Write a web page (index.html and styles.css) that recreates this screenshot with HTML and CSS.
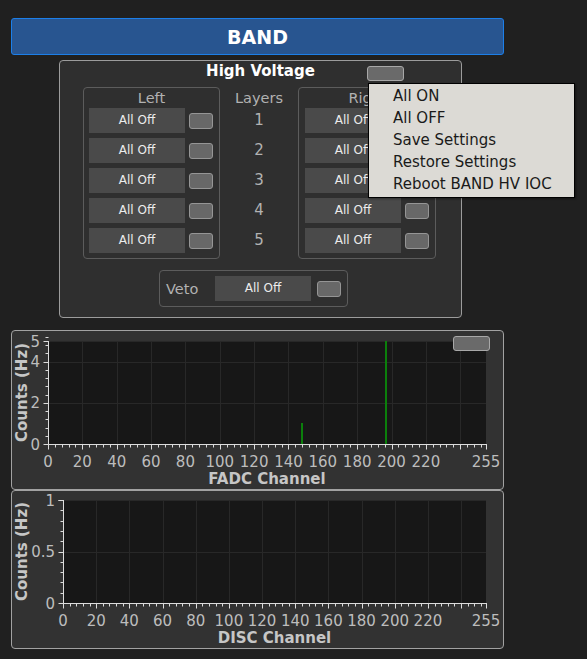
FILE: index.html
```html
<!DOCTYPE html>
<html>
<head>
<meta charset="utf-8">
<link rel="stylesheet" href="styles.css">
</head>
<body>
<div class="page">
  <div class="header">BAND</div>

  <section class="hv">
    <div class="hv-title-row">
      <span></span>
      <h2 class="hv-title">High Voltage</h2>
      <div class="hv-menu-cell"><div class="mini-btn"></div></div>
    </div>

    <div class="hv-groups">
      <div class="group group-left">
        <div class="group-label">Left</div>
        <div class="row"><div class="off-btn">All Off</div><div class="ind"></div></div>
        <div class="row"><div class="off-btn">All Off</div><div class="ind"></div></div>
        <div class="row"><div class="off-btn">All Off</div><div class="ind"></div></div>
        <div class="row"><div class="off-btn">All Off</div><div class="ind"></div></div>
        <div class="row"><div class="off-btn">All Off</div><div class="ind"></div></div>
      </div>
      <div class="layers">
        <div class="group-label">Layers</div>
        <div class="layer-num">1</div>
        <div class="layer-num">2</div>
        <div class="layer-num">3</div>
        <div class="layer-num">4</div>
        <div class="layer-num">5</div>
      </div>
      <div class="group group-right">
        <div class="group-label">Right</div>
        <div class="row"><div class="off-btn">All Off</div><div class="ind"></div></div>
        <div class="row"><div class="off-btn">All Off</div><div class="ind"></div></div>
        <div class="row"><div class="off-btn">All Off</div><div class="ind"></div></div>
        <div class="row"><div class="off-btn">All Off</div><div class="ind"></div></div>
        <div class="row"><div class="off-btn">All Off</div><div class="ind"></div></div>
      </div>
    </div>

    <div class="veto">
      <span class="veto-label">Veto</span>
      <div class="off-btn">All Off</div>
      <div class="ind"></div>
    </div>

    <ul class="menu">
      <li>All ON</li>
      <li>All OFF</li>
      <li>Save Settings</li>
      <li>Restore Settings</li>
      <li>Reboot BAND HV IOC</li>
    </ul>
  </section>

  <section class="chart chart-fadc">
    <svg id="fadc" xmlns="http://www.w3.org/2000/svg"></svg>
    <div class="mini-btn corner-btn"></div>
  </section>

  <section class="chart chart-disc">
    <svg id="disc" xmlns="http://www.w3.org/2000/svg"></svg>
  </section>
</div>
<script src="chart.js"></script>
</body>
</html>
```

FILE: styles.css
```css
html, body {
  margin: 0;
  padding: 0;
  background: #202020;
  font-family: "DejaVu Sans", "Noto Sans", sans-serif;
}

.page {
  padding: 18px 0 0 11px;
  width: 493px;
}

.header {
  box-sizing: border-box;
  width: 493px;
  height: 37px;
  background: #285590;
  border: 1px solid #1c7fe9;
  border-radius: 3px;
  color: #ffffff;
  font-weight: bold;
  font-size: 19px;
  display: flex;
  align-items: center;
  justify-content: center;
}

.hv {
  position: relative;
  box-sizing: border-box;
  margin: 5px 0 0 48px;
  width: 403px;
  height: 258px;
  background: #2f2f2f;
  border: 1px solid #9c9c9c;
  border-radius: 4px;
}

.hv-title-row {
  display: grid;
  grid-template-columns: 1fr auto 1fr;
  height: 20px;
}

.hv-title {
  margin: 0;
  font-size: 15px;
  font-weight: bold;
  color: #ffffff;
  line-height: 20px;
}

.hv-menu-cell {
  display: flex;
  align-items: flex-end;
}

.mini-btn {
  box-sizing: border-box;
  width: 37px;
  height: 15px;
  background: #6a6a6a;
  border: 1px solid #a8a8a8;
  border-radius: 3px;
}

.hv-menu-cell .mini-btn {
  margin-left: 52px;
}

.hv-groups {
  display: flex;
  margin: 6px 0 0 23px;
}

.group {
  box-sizing: border-box;
  width: 137px;
  height: 172px;
  border: 1px solid #5c5c5c;
  border-radius: 4px;
  padding: 0 0 0 5px;
  display: flex;
  flex-direction: column;
  gap: 5px;
}

.group-right {
  width: 138px;
  padding-left: 6px;
}

.group-label {
  height: 20px;
  line-height: 20px;
  margin-bottom: -5px;
  font-size: 14.5px;
  color: #b2b2b2;
  text-align: center;
}

.group .group-label {
  margin-left: -5px;
}

.row {
  display: flex;
  align-items: center;
  gap: 4px;
  height: 25px;
}

.off-btn {
  width: 96px;
  height: 25px;
  background: #4a4a4a;
  color: #ececec;
  font-size: 12px;
  line-height: 25px;
  text-align: center;
  flex: none;
}

.ind {
  box-sizing: border-box;
  width: 24px;
  height: 16px;
  background: #686868;
  border: 1px solid #959595;
  border-radius: 3px;
  flex: none;
}

.layers {
  width: 78px;
  padding-top: 1px;
  display: flex;
  flex-direction: column;
  gap: 5px;
}

.layer-num {
  height: 25px;
  line-height: 25px;
  text-align: center;
  font-size: 15px;
  color: #b2b2b2;
}

.veto {
  box-sizing: border-box;
  margin: 11px 0 0 99px;
  width: 189px;
  height: 37px;
  border: 1px solid #5c5c5c;
  border-radius: 4px;
  padding: 0 5px 0 6px;
  display: flex;
  align-items: center;
}

.veto-label {
  font-size: 14.5px;
  color: #b2b2b2;
  width: 49px;
}

.veto .ind {
  margin-left: 6px;
}

.menu {
  position: absolute;
  left: 308px;
  top: 22px;
  box-sizing: border-box;
  width: 207px;
  height: 115px;
  margin: 0;
  padding: 1px 0 0 24px;
  list-style: none;
  background: #dcdad5;
  border: 1px solid #000000;
  box-shadow: 1px 1px 2px rgba(0, 0, 0, 0.4);
}

.menu li {
  height: 22px;
  line-height: 22px;
  font-size: 15px;
  color: #1a1a1a;
  white-space: nowrap;
}

.chart {
  position: relative;
  box-sizing: border-box;
  width: 493px;
  background: #323232;
  border: 1px solid #a2a2a2;
  border-radius: 4px;
}

.chart svg {
  display: block;
}

.chart-fadc {
  margin-top: 12px;
  height: 160px;
}

.chart-disc {
  height: 159px;
}

.corner-btn {
  position: absolute;
  left: 441px;
  top: 5px;
}

.plot-bg { fill: #171717; }
.grid { stroke: #282828; stroke-width: 1; }
.axis { stroke: #dcdcdc; stroke-width: 1; }
.bar { fill: #0b7f0b; }
.tick-label {
  font-family: "DejaVu Sans", sans-serif;
  font-size: 15px;
  fill: #bdbdbd;
}
.axis-title {
  font-family: "DejaVu Sans", sans-serif;
  font-size: 15px;
  font-weight: bold;
  fill: #c6c6c6;
}
```

FILE: chart.js
```javascript
(function () {
  var NS = 'http://www.w3.org/2000/svg';

  function draw(id, c) {
    var svg = document.getElementById(id);
    svg.setAttribute('viewBox', c.vb.join(' '));
    svg.setAttribute('width', c.vb[2]);
    svg.setAttribute('height', c.vb[3]);

    function add(tag, attrs, text) {
      var e = document.createElementNS(NS, tag);
      for (var k in attrs) e.setAttribute(k, attrs[k]);
      if (text !== undefined) e.textContent = text;
      svg.appendChild(e);
      return e;
    }
    function sx(v) { return c.x0 + v * (c.x1 - c.x0) / 255; }
    function sy(v) { return c.yBot - v * (c.yBot - c.yTop) / c.ymax; }
    function px(v) { return Math.round(v) + 0.5; }

    add('rect', { x: c.x0, y: c.yTop, width: c.x1 - c.x0, height: c.yBot - c.yTop, 'class': 'plot-bg' });

    var v, x, y;
    for (v = 20; v <= 240; v += 20) {
      x = px(sx(v));
      add('line', { x1: x, x2: x, y1: c.yTop, y2: c.yBot, 'class': 'grid' });
    }
    add('line', { x1: c.x0, x2: c.x1, y1: c.yTop + 0.5, y2: c.yTop + 0.5, 'class': 'grid' });
    c.yGrid.forEach(function (g) {
      var yy = px(sy(g));
      add('line', { x1: c.x0, x2: c.x1, y1: yy, y2: yy, 'class': 'grid' });
    });

    (c.bars || []).forEach(function (b) {
      add('rect', { x: b.x, y: b.top, width: 2, height: c.yBot - b.top, 'class': 'bar' });
    });

    var ax = c.x0 + 0.5, ay = c.yBot + 0.5;
    add('line', { x1: ax, x2: ax, y1: c.yTop, y2: ay, 'class': 'axis' });
    add('line', { x1: c.x0, x2: c.x1 + 1, y1: ay, y2: ay, 'class': 'axis' });

    for (v = 0; v <= 252; v += 4) {
      var major = v % 20 === 0;
      x = px(sx(v));
      add('line', { x1: x, x2: x, y1: ay, y2: ay + (major ? 5 : 3), 'class': 'axis' });
    }
    x = px(sx(255));
    add('line', { x1: x, x2: x, y1: ay, y2: ay + 5, 'class': 'axis' });

    var n = Math.round(c.ymax / c.yStep);
    for (var k = 0; k <= n; k++) {
      v = k * c.yStep;
      var maj = c.yMajor.some(function (m) { return Math.abs(m - v) < 1e-6; });
      y = px(sy(v));
      add('line', { x1: ax - (maj ? 5 : 3), x2: ax, y1: y, y2: y, 'class': 'axis' });
    }
    y = px(sy(c.ymax));
    add('line', { x1: ax - 5, x2: ax, y1: y, y2: y, 'class': 'axis' });

    c.yLabels.forEach(function (l) {
      add('text', { x: c.x0 - 8, y: sy(l.v) + 5.5, 'text-anchor': 'end', 'class': 'tick-label' }, l.t);
    });
    var xl = [0, 20, 40, 60, 80, 100, 120, 140, 160, 180, 200, 220];
    xl.forEach(function (l) {
      add('text', { x: sx(l), y: c.yBot + 22.5, 'text-anchor': 'middle', 'class': 'tick-label' }, String(l));
    });
    add('text', { x: sx(255), y: c.yBot + 22.5, 'text-anchor': 'middle', 'class': 'tick-label' }, '255');

    add('text', { x: (c.x0 + c.x1) / 2, y: c.titleY, 'text-anchor': 'middle', 'class': 'axis-title' }, c.title);
    add('text', { x: 0, y: 0, 'text-anchor': 'middle', 'class': 'axis-title',
      transform: 'translate(27 ' + ((c.yTop + c.yBot) / 2) + ') rotate(-90)' }, 'Counts (Hz)');
  }

  draw('fadc', {
    vb: [12, 331, 491, 158],
    x0: 48, x1: 486, yTop: 341, yBot: 444, ymax: 5, yStep: 0.4,
    yMajor: [0, 2, 4], yGrid: [2, 4],
    yLabels: [{ v: 0, t: '0' }, { v: 2, t: '2' }, { v: 4, t: '4' }, { v: 5, t: '5' }],
    bars: [{ x: 301, top: 423 }, { x: 385, top: 341 }],
    title: 'FADC Channel', titleY: 484
  });

  draw('disc', {
    vb: [12, 491, 491, 157],
    x0: 63, x1: 486, yTop: 500, yBot: 603, ymax: 1, yStep: 0.1,
    yMajor: [0, 0.5, 1], yGrid: [0.5],
    yLabels: [{ v: 0, t: '0' }, { v: 0.5, t: '0.5' }, { v: 1, t: '1' }],
    bars: [],
    title: 'DISC Channel', titleY: 643
  });
})();
```
